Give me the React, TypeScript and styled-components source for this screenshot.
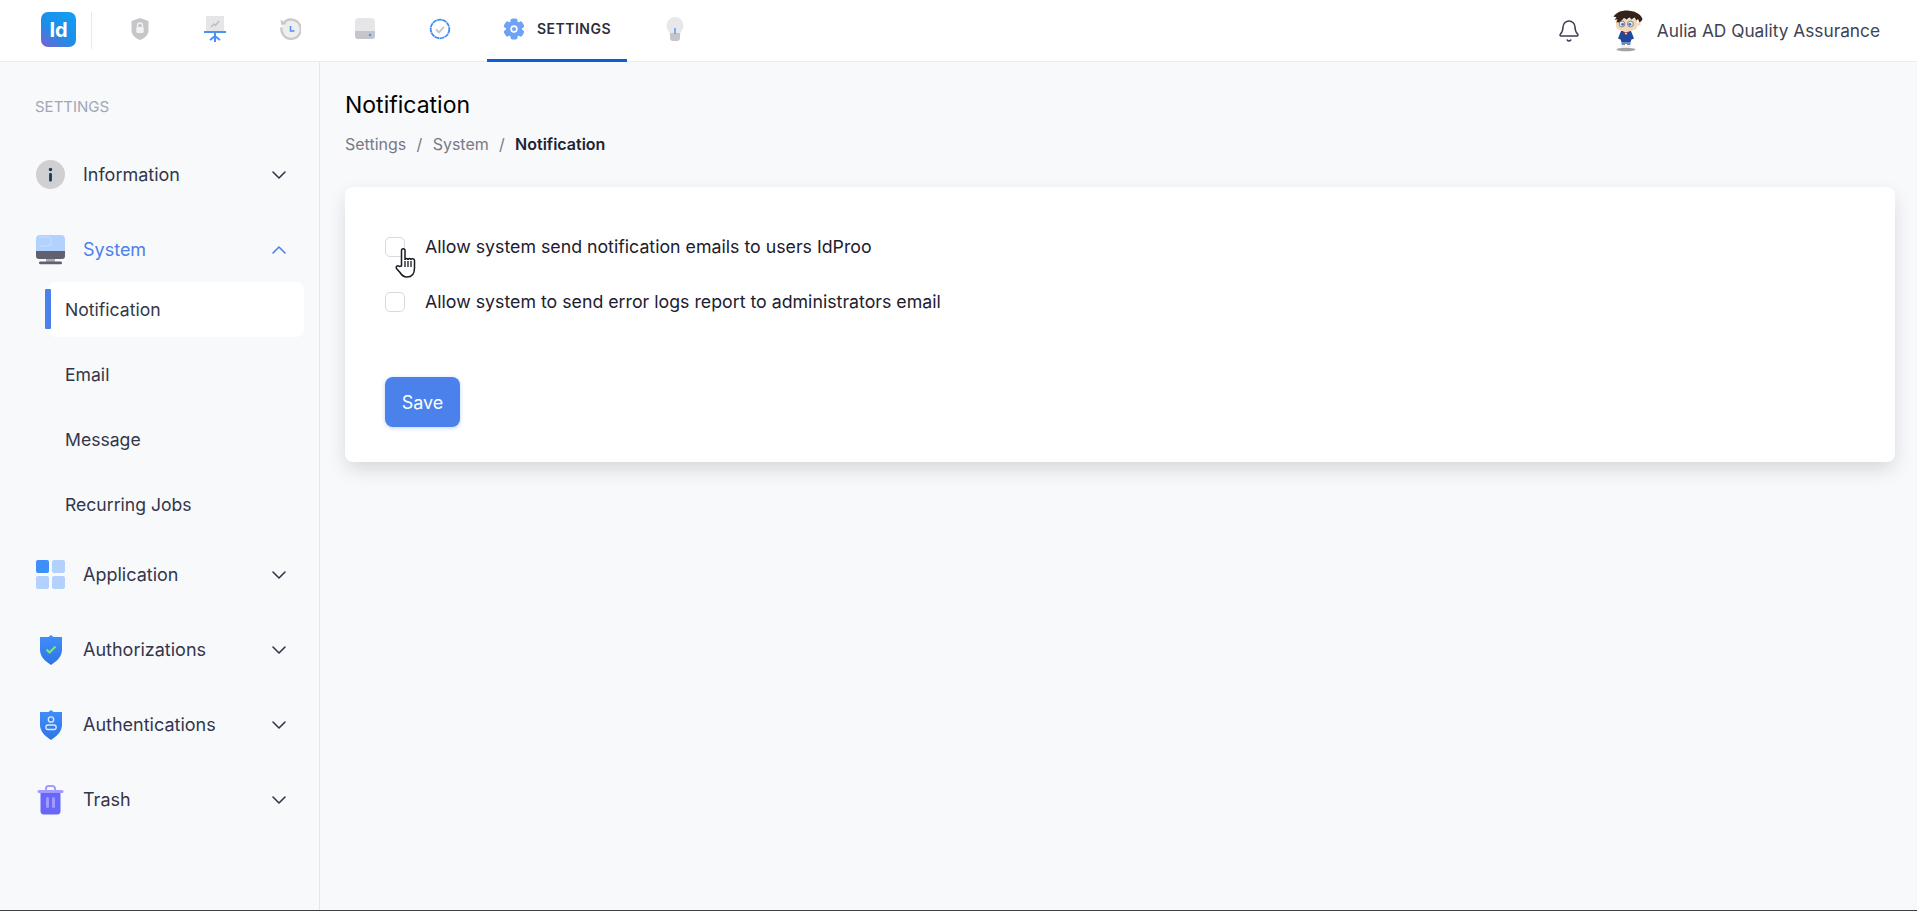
import React from "react";
import styled, { createGlobalStyle } from "styled-components";
import { Bell, ChevronDown, ChevronUp } from "lucide-react";

const Global = createGlobalStyle`
  * { box-sizing: border-box; }
  html, body { margin: 0; padding: 0; height: 100%; }
  body { font-family: Inter, "Noto Sans", sans-serif; background: #f8f9fb; color: #2b2e3d; overflow: hidden; }
`;

const Page = styled.div`
  height: 100vh;
  display: flex;
  flex-direction: column;
  background: #f8f9fb;
  border-bottom: 1px solid #3d3f44;
`;

const Header = styled.header`
  height: 62px;
  flex: none;
  display: flex;
  align-items: center;
  background: #fff;
  border-bottom: 1px solid #ececef;
  padding: 0 37px 0 41px;
`;

const Logo = styled.div`
  width: 35px;
  height: 35px;
  margin-top: -2px;
  border-radius: 7px;
  background: linear-gradient(215deg, #12a0f6 0%, #1b8ee8 55%, #7a62d0 100%);
  color: #fff;
  font-weight: 700;
  font-size: 20px;
  display: flex;
  align-items: center;
  justify-content: center;
`;

const Divider = styled.div`
  width: 1px;
  height: 37px;
  margin: -1px 0 0 15px;
  background: #e8e8ec;
`;

const Tabs = styled.nav`
  display: flex;
  align-self: stretch;
  margin-left: 10px;
`;

const Tab = styled.div<{ $active?: boolean; $w?: number }>`
  height: 62px;
  margin-bottom: -1px;
  width: ${(p) => p.$w ?? 75}px;
  margin-left: ${(p) => (p.$active ? 10 : 0)}px;
  display: flex;
  align-items: center;
  justify-content: center;
  gap: 12px;
  padding-bottom: 2px;
  border-bottom: 3px solid ${(p) => (p.$active ? "#0b5ed7" : "transparent")};
`;

const TabLabel = styled.span`
  font-size: 14px;
  font-weight: 600;
  letter-spacing: 0.5px;
  color: #2b2e3d;
`;

const HeaderRight = styled.div`
  margin-left: auto;
  display: flex;
  align-items: center;
`;

const BellWrap = styled.div`
  display: flex;
  color: #3b3f51;
  margin-right: 27px;
`;

const UserName = styled.span`
  margin-left: 13px;
  font-size: 17.3px;
  color: #3f4254;
`;

const Body = styled.div`
  flex: 1;
  display: flex;
  min-height: 0;
`;

const Sidebar = styled.aside`
  width: 320px;
  flex: none;
  border-right: 1px solid #e6e7eb;
  padding: 36px 15px 0 36px;
`;

const SideTitle = styled.div`
  margin: 0 0 32px -1px;
  font-size: 15px;
  line-height: 17px;
  color: #a1a5b7;
`;

const Nav = styled.div`
  display: flex;
  flex-direction: column;
  gap: 20px;
`;

const NavItem = styled.div<{ $open?: boolean }>`
  height: 55px;
  display: flex;
  align-items: center;
  padding-right: 13px;
  font-size: 18px;
  font-weight: 400;
  color: ${(p) => (p.$open ? "#4a81eb" : "#33364a")};
`;

const NavIcon = styled.span`
  width: 29px;
  height: 30px;
  flex: none;
  display: flex;
  align-items: center;
  justify-content: center;
  margin-right: 18px;
`;

const NavLabel = styled.span`
  flex: 1;
`;

const Chevron = styled.span`
  display: flex;
  color: inherit;
`;

const SubList = styled.div`
  display: flex;
  flex-direction: column;
  gap: 10px;
  margin: -15px 0 -5px 12px;
`;

const SubItem = styled.div<{ $active?: boolean }>`
  position: relative;
  height: 55px;
  display: flex;
  align-items: center;
  padding-left: 17px;
  border-radius: 8px;
  font-size: 17.6px;
  font-weight: 400;
  color: #33364a;
  background: ${(p) => (p.$active ? "#fff" : "transparent")};
  ${(p) =>
    p.$active &&
    `&::before {
      content: "";
      position: absolute;
      left: -3px;
      top: 7px;
      width: 6px;
      height: 40px;
      background: #4a81eb;
      border-radius: 1px;
    }`}
`;

const Main = styled.main`
  flex: 1;
  min-width: 0;
  padding: 29px 22px 0 25px;
`;

const Title = styled.h1`
  margin: 0;
  font-size: 23px;
  line-height: 28px;
  font-weight: 400;
  color: #000;
`;

const Crumbs = styled.div`
  margin-top: 15px;
  display: flex;
  gap: 10.3px;
  font-size: 16px;
  line-height: 20px;
  color: #777a85;
`;

const CrumbStrong = styled.span`
  font-weight: 600;
  color: #1e2235;
`;

const Card = styled.section`
  margin-top: 33px;
  height: 275px;
  padding: 50px 40px 0;
  background: #fff;
  border-radius: 8px;
  box-shadow: 0 8px 20px -2px rgba(20, 25, 40, 0.16);
`;

const Options = styled.div`
  display: flex;
  flex-direction: column;
  gap: 35px;
`;

const Option = styled.label`
  position: relative;
  height: 20px;
  display: flex;
  align-items: center;
  gap: 20px;
  font-size: 17.75px;
  font-weight: 400;
  color: #1d2030;
`;

const OptionText = styled.span`
  margin-top: -2px;
`;

const Box = styled.span`
  width: 20px;
  height: 20px;
  flex: none;
  background: #fff;
  border: 1px solid #d8d9e1;
  border-radius: 5px;
`;

const Cursor = styled.svg`
  position: absolute;
  left: 9px;
  top: 10px;
`;

const SaveButton = styled.button`
  margin-top: 65px;
  width: 75px;
  height: 50px;
  border: 0;
  border-radius: 8px;
  background: #4a81eb;
  color: #fff;
  font: 400 18px Inter, sans-serif;
  box-shadow: 0 1px 4px rgba(74, 129, 235, 0.35);
`;

const ShieldLock = () => (
  <svg width="20" height="24" viewBox="0 0 20 24">
    <path d="M10 1l8.500 3v9c0 5-4 8.500-8.500 10C5.500 21.500 1.500 18 1.500 13V4z" fill="#c5c5ca" />
    <path d="M7.500 10V8.500a2.500 2.500 0 015 0V10" fill="none" stroke="#f2f2f4" strokeWidth="1.300" />
    <rect x="6.300" y="10" width="7.400" height="6" rx="1.200" fill="#f2f2f4" />
  </svg>
);

const Presentation = () => (
  <svg width="22" height="28" viewBox="0 0 22 28">
    <rect x="2" y="1" width="18" height="15" fill="#e6e6e8" />
    <path d="M7 12l3-3 1.500 1.500L15 6" fill="none" stroke="#bcbcc2" strokeWidth="1.400" />
    <rect x="0" y="16" width="22" height="2" fill="#4a90f5" />
    <path d="M11 18v5M11 21l-5 4M11 21l5 4M11 23v4" fill="none" stroke="#4a90f5" strokeWidth="2" />
  </svg>
);

const History = () => (
  <svg width="22" height="24" viewBox="0 0 22 24">
    <path d="M5 5.500a9.700 9.700 0 11-2.500 5" fill="#eeeef0" stroke="#c7c7cc" strokeWidth="2.200" />
    <path d="M1.500 2.500l.8 5.500 5.300-1z" fill="#c7c7cc" />
    <path d="M11.500 9v5h4" fill="none" stroke="#4a90f5" strokeWidth="1.500" />
  </svg>
);

const Drive = () => (
  <svg width="22" height="22" viewBox="0 0 22 22">
    <path d="M5 0h12a4 4 0 014 4v10H1V4a4 4 0 014-4z" fill="#e6e6e8" />
    <path d="M1 13h20v5a3 3 0 01-3 3H4a3 3 0 01-3-3z" fill="#c5c5cb" />
    <circle cx="16" cy="17" r="1.200" fill="#4a90f5" />
  </svg>
);

const Badge = () => (
  <svg width="22" height="22" viewBox="0 0 22 22">
    <circle cx="11" cy="11" r="9.300" fill="#fff" stroke="#3f8cf5" strokeWidth="1.800" strokeDasharray="4.600 0.500" />
    <path d="M7 11.500l3 2.800 5-5.500" fill="none" stroke="#c5c5ca" strokeWidth="2" />
  </svg>
);

const Gear = () => (
  <svg width="22" height="22" viewBox="0 0 22 22">
    <g fill="#6ea2f8">
      <circle cx="11" cy="11" r="8" />
      {[0, 60, 120, 180, 240, 300].map((a) => (
        <rect key={a} x="7.500" y="0.500" width="7" height="6" rx="2" transform={`rotate(${a} 11 11)`} />
      ))}
    </g>
    <circle cx="11" cy="11" r="3.700" fill="#fff" />
    <circle cx="11" cy="11" r="2" fill="#6ea2f8" />
  </svg>
);

const Bulb = () => (
  <svg width="18" height="24" viewBox="0 0 18 24">
    <path d="M9 0a8.500 8.500 0 018.500 8.500c0 3-1.500 5-3 7v2h-11v-2c-1.500-2-3-4-3-7A8.500 8.500 0 019 0z" fill="#e8e8ea" />
    <path d="M4 16h10v5a3 3 0 01-3 3H7a3 3 0 01-3-3z" fill="#c5c5cb" />
    <path d="M9 11v6" stroke="#4a90f5" strokeWidth="1.400" />
  </svg>
);

const Avatar = () => (
  <svg width="36" height="42" viewBox="0 0 36 42">
    <ellipse cx="18" cy="39.500" rx="9.500" ry="1.800" fill="#a3a3a3" />
    <path d="M13.500 31h9v4h-3.500v-1h-2v1h-3.500z" fill="#6f8db5" />
    <path d="M13.500 35.500h3.500v2h-3.500zM19 35.500h3.500v2H19z" fill="#e9e9e9" />
    <path d="M13 21h10l3 7.500-2.500 1-1 2.500h-9l-1-2.500-2.500-1z" fill="#1f4a9c" />
    <path d="M15.500 21h5l-2.500 4z" fill="#eeeeee" />
    <path d="M15.800 21.500l2.200.8 2.200-.8v2l-2.200-.7-2.200.7z" fill="#c8352d" />
    <path d="M8 9h21l.5 7c0 3-5 5.500-11 5.500S8 19 8 16z" fill="#f4d6bb" />
    <circle cx="31" cy="14" r="1.800" fill="#f4d6bb" />
    <path d="M1 6.500l4.500.2C8 2.500 13 .5 19 .5c7 0 14 3.500 15.500 8.500-.5 1.500-1.500 2.500-3 3.500l-1.500-3.500-1.500 1.500-2-3-3 2-2-2-3 2-2.500-1.500-3 3-1.500 3.500-1-2.500-2 .5 1-3.500-3 1 2-3z" fill="#34231a" />
    <circle cx="14" cy="14" r="2.900" fill="#e8eef5" stroke="#5e6f85" strokeWidth="0.800" />
    <circle cx="22.500" cy="14" r="2.900" fill="#e8eef5" stroke="#5e6f85" strokeWidth="0.800" />
    <circle cx="14.600" cy="14.300" r="1.400" fill="#3f74ad" />
    <circle cx="21.900" cy="14.300" r="1.400" fill="#3f74ad" />
  </svg>
);

const Info = () => (
  <svg width="29" height="29" viewBox="0 0 29 29">
    <circle cx="14.500" cy="14.500" r="14.500" fill="#d0d0d2" />
    <circle cx="14.500" cy="9.500" r="1.700" fill="#123c5a" />
    <rect x="13.100" y="13" width="2.800" height="8.500" rx="1" fill="#123c5a" />
  </svg>
);

const Monitor = () => (
  <svg width="29" height="30" viewBox="0 0 29 30">
    <path d="M4 0h21a4 4 0 014 4v13H0V4a4 4 0 014-4z" fill="#b3d1ff" />
    <path d="M3 2h9a3 3 0 013 3v3a3 3 0 01-3 3H3" fill="none" stroke="#d3e4ff" strokeWidth="0.700" />
    <path d="M0 16h29v5a3 3 0 01-3 3H3a3 3 0 01-3-3z" fill="#5f6070" />
    <rect x="10" y="24" width="9" height="3" fill="#a9abae" />
    <rect x="3" y="26.500" width="23" height="2.800" rx="1.400" fill="#5f6070" />
  </svg>
);

const Grid = () => (
  <svg width="29" height="29" viewBox="0 0 29 29">
    <rect width="13" height="13" rx="2" fill="#3f8ffb" />
    <rect x="16" width="13" height="13" rx="2" fill="#b3d1ff" />
    <rect y="16" width="13" height="13" rx="2" fill="#b3d1ff" />
    <rect x="16" y="16" width="13" height="13" rx="2" fill="#b3d1ff" />
  </svg>
);

const ShieldBlue = ({ children }: { children: React.ReactNode }) => (
  <svg width="24" height="30" viewBox="0 0 24 30">
    <defs>
      <linearGradient id="shieldFill" x1="0" y1="0" x2="0" y2="1">
        <stop offset="0" stopColor="#3f8ffb" />
        <stop offset="1" stopColor="#2f74e6" />
      </linearGradient>
    </defs>
    <path d="M12 0l2.500 2 8.500 0v13c0 6.500-5.500 11.500-11 15C6.500 26.500 1 21.500 1 15V2l8.500 0z" fill="url(#shieldFill)" />
    {children}
  </svg>
);

const Trash = () => (
  <svg width="27" height="30" viewBox="0 0 27 30">
    <path d="M9 5V3.500A2.500 2.500 0 0111.500 1h4A2.500 2.500 0 0118 3.500V5" fill="none" stroke="#a19bff" strokeWidth="2" />
    <rect x="0.500" y="5" width="26" height="3" rx="1.500" fill="#a19bff" />
    <path d="M3.500 8h20v18a3.500 3.500 0 01-3.500 3.500H7A3.500 3.500 0 013.500 26z" fill="#6767fb" />
    <rect x="9" y="12" width="3" height="11" rx="1.500" fill="#a19bff" />
    <rect x="15" y="12" width="3" height="11" rx="1.500" fill="#a19bff" />
  </svg>
);

const items = [
  { label: "Information", icon: <Info /> },
  { label: "System", icon: <Monitor />, open: true },
  { label: "Application", icon: <Grid /> },
  {
    label: "Authorizations",
    icon: (
      <ShieldBlue>
        <path d="M7.500 14.500l3 3 6-6" fill="none" stroke="#7fe08a" strokeWidth="2.200" />
      </ShieldBlue>
    ),
  },
  {
    label: "Authentications",
    icon: (
      <ShieldBlue>
        <circle cx="12" cy="9.500" r="2.700" fill="none" stroke="#dbe9ff" strokeWidth="1.300" />
        <rect x="6.800" y="15" width="10.400" height="4.500" rx="2.250" fill="none" stroke="#dbe9ff" strokeWidth="1.300" />
      </ShieldBlue>
    ),
  },
  { label: "Trash", icon: <Trash /> },
];

const subItems = ["Notification", "Email", "Message", "Recurring Jobs"];

export default function App() {
  return (
    <Page>
      <Global />
      <Header>
        <Logo>Id</Logo>
        <Divider />
        <Tabs>
          <Tab><ShieldLock /></Tab>
          <Tab><Presentation /></Tab>
          <Tab><History /></Tab>
          <Tab><Drive /></Tab>
          <Tab><Badge /></Tab>
          <Tab $active $w={140}><Gear /><TabLabel>SETTINGS</TabLabel></Tab>
          <Tab $w={95}><Bulb /></Tab>
        </Tabs>
        <HeaderRight>
          <BellWrap><Bell size={24} strokeWidth={1.5} /></BellWrap>
          <Avatar />
          <UserName>Aulia AD Quality Assurance</UserName>
        </HeaderRight>
      </Header>
      <Body>
        <Sidebar>
          <SideTitle>SETTINGS</SideTitle>
          <Nav>
            {items.map((it) => (
              <React.Fragment key={it.label}>
                <NavItem $open={it.open}>
                  <NavIcon>{it.icon}</NavIcon>
                  <NavLabel>{it.label}</NavLabel>
                  <Chevron>
                    {it.open ? <ChevronUp size={24} strokeWidth={1.6} /> : <ChevronDown size={24} strokeWidth={1.6} />}
                  </Chevron>
                </NavItem>
                {it.open && (
                  <SubList>
                    {subItems.map((s, i) => (
                      <SubItem key={s} $active={i === 0}>{s}</SubItem>
                    ))}
                  </SubList>
                )}
              </React.Fragment>
            ))}
          </Nav>
        </Sidebar>
        <Main>
          <Title>Notification</Title>
          <Crumbs>
            <span>Settings</span><span>/</span><span>System</span><span>/</span>
            <CrumbStrong>Notification</CrumbStrong>
          </Crumbs>
          <Card>
            <Options>
              <Option>
                <Box />
                <OptionText>Allow system send notification emails to users IdProo</OptionText>
                <Cursor width="24" height="32" viewBox="0 0 24 32">
                  <path
                    d="M7.500 19V3.500c0-2.500 3.500-2.500 3.500 0V13c0-2 3-2 3 0 0-2 3-2 3 0 0-1.800 3.500-1.800 3.500.5V21c0 5-2 9-7.500 9-4 0-5.500-2-7-4.500l-3.500-4c-1-2 1-3.500 3-2z"
                    fill="#fff"
                    stroke="#1a1c24"
                    strokeWidth="1.500"
                  />
                  <path d="M11 14v6M14 14v6M17 14v6" stroke="#1a1c24" strokeWidth="1.300" fill="none" />
                </Cursor>
              </Option>
              <Option>
                <Box />
                <OptionText>Allow system to send error logs report to administrators email</OptionText>
              </Option>
            </Options>
            <SaveButton type="button">Save</SaveButton>
          </Card>
        </Main>
      </Body>
    </Page>
  );
}
